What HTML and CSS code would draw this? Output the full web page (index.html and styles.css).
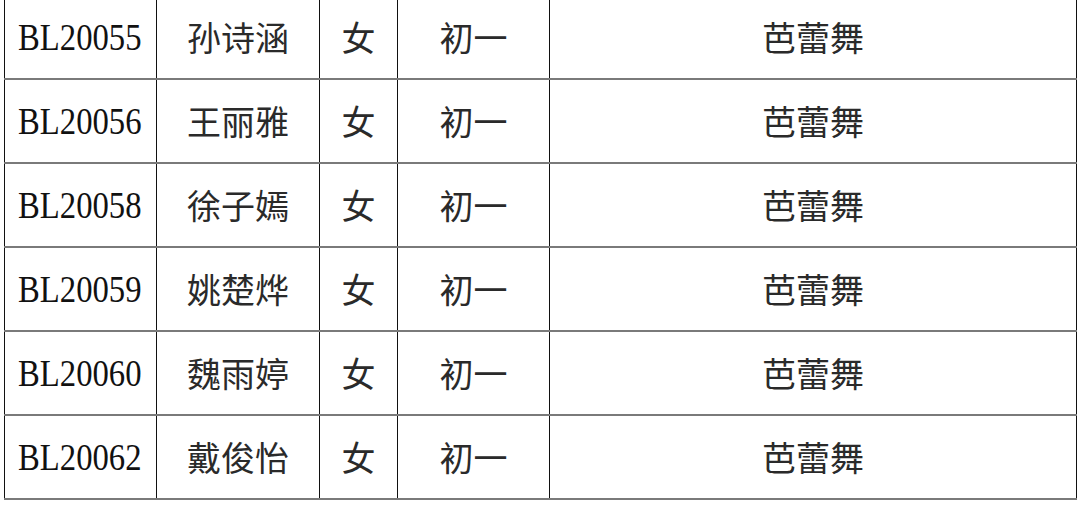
FILE: index.html
```html
<!DOCTYPE html>
<html lang="zh-CN">
<head>
<meta charset="utf-8">
<title>名单</title>
<link rel="stylesheet" href="styles.css">
</head>
<body>
<table class="roster">
  <colgroup>
    <col class="c-id"><col class="c-name"><col class="c-sex"><col class="c-grade"><col class="c-item">
  </colgroup>
  <tbody>
    <tr><td class="id"><span class="code">BL20055</span></td><td>孙诗涵</td><td>女</td><td>初一</td><td>芭蕾舞</td></tr>
    <tr><td class="id"><span class="code">BL20056</span></td><td>王丽雅</td><td>女</td><td>初一</td><td>芭蕾舞</td></tr>
    <tr><td class="id"><span class="code">BL20058</span></td><td>徐子嫣</td><td>女</td><td>初一</td><td>芭蕾舞</td></tr>
    <tr><td class="id"><span class="code">BL20059</span></td><td>姚楚烨</td><td>女</td><td>初一</td><td>芭蕾舞</td></tr>
    <tr><td class="id"><span class="code">BL20060</span></td><td>魏雨婷</td><td>女</td><td>初一</td><td>芭蕾舞</td></tr>
    <tr><td class="id"><span class="code">BL20062</span></td><td>戴俊怡</td><td>女</td><td>初一</td><td>芭蕾舞</td></tr>
  </tbody>
</table>
</body>
</html>
```
FILE: styles.css
```css
html, body {
  margin: 0;
  padding: 0;
  background: #ffffff;
  overflow: hidden;
}

.roster {
  margin: -5px 0 0 4px;
  width: 1072px;
  table-layout: fixed;
  border-collapse: collapse;
  color: #2a2a2a;
  font-family: "Noto Sans CJK SC", "Liberation Serif", serif;
  font-size: 34px;
}

.c-id { width: 152px; }
.c-name { width: 163px; }
.c-sex { width: 78px; }
.c-grade { width: 152px; }
.c-item { width: 527px; }

.roster tr {
  height: 84px;
}

.roster td {
  padding: 0;
  text-align: center;
  vertical-align: middle;
  line-height: 40px;
  border-left: 1px solid #111;
  border-right: 1px solid #111;
  border-top: 2px solid #7a7a7a;
  border-bottom: 2px solid #7a7a7a;
  white-space: nowrap;
}

.roster tr:first-child td {
  border-top: none;
}

.roster td.id {
  font-family: "Liberation Serif", serif;
  font-size: 38px;
  color: #111;
}

.code {
  display: inline-block;
  transform: scaleX(0.86);
  transform-origin: center;
  margin-left: -2px;
}
```
